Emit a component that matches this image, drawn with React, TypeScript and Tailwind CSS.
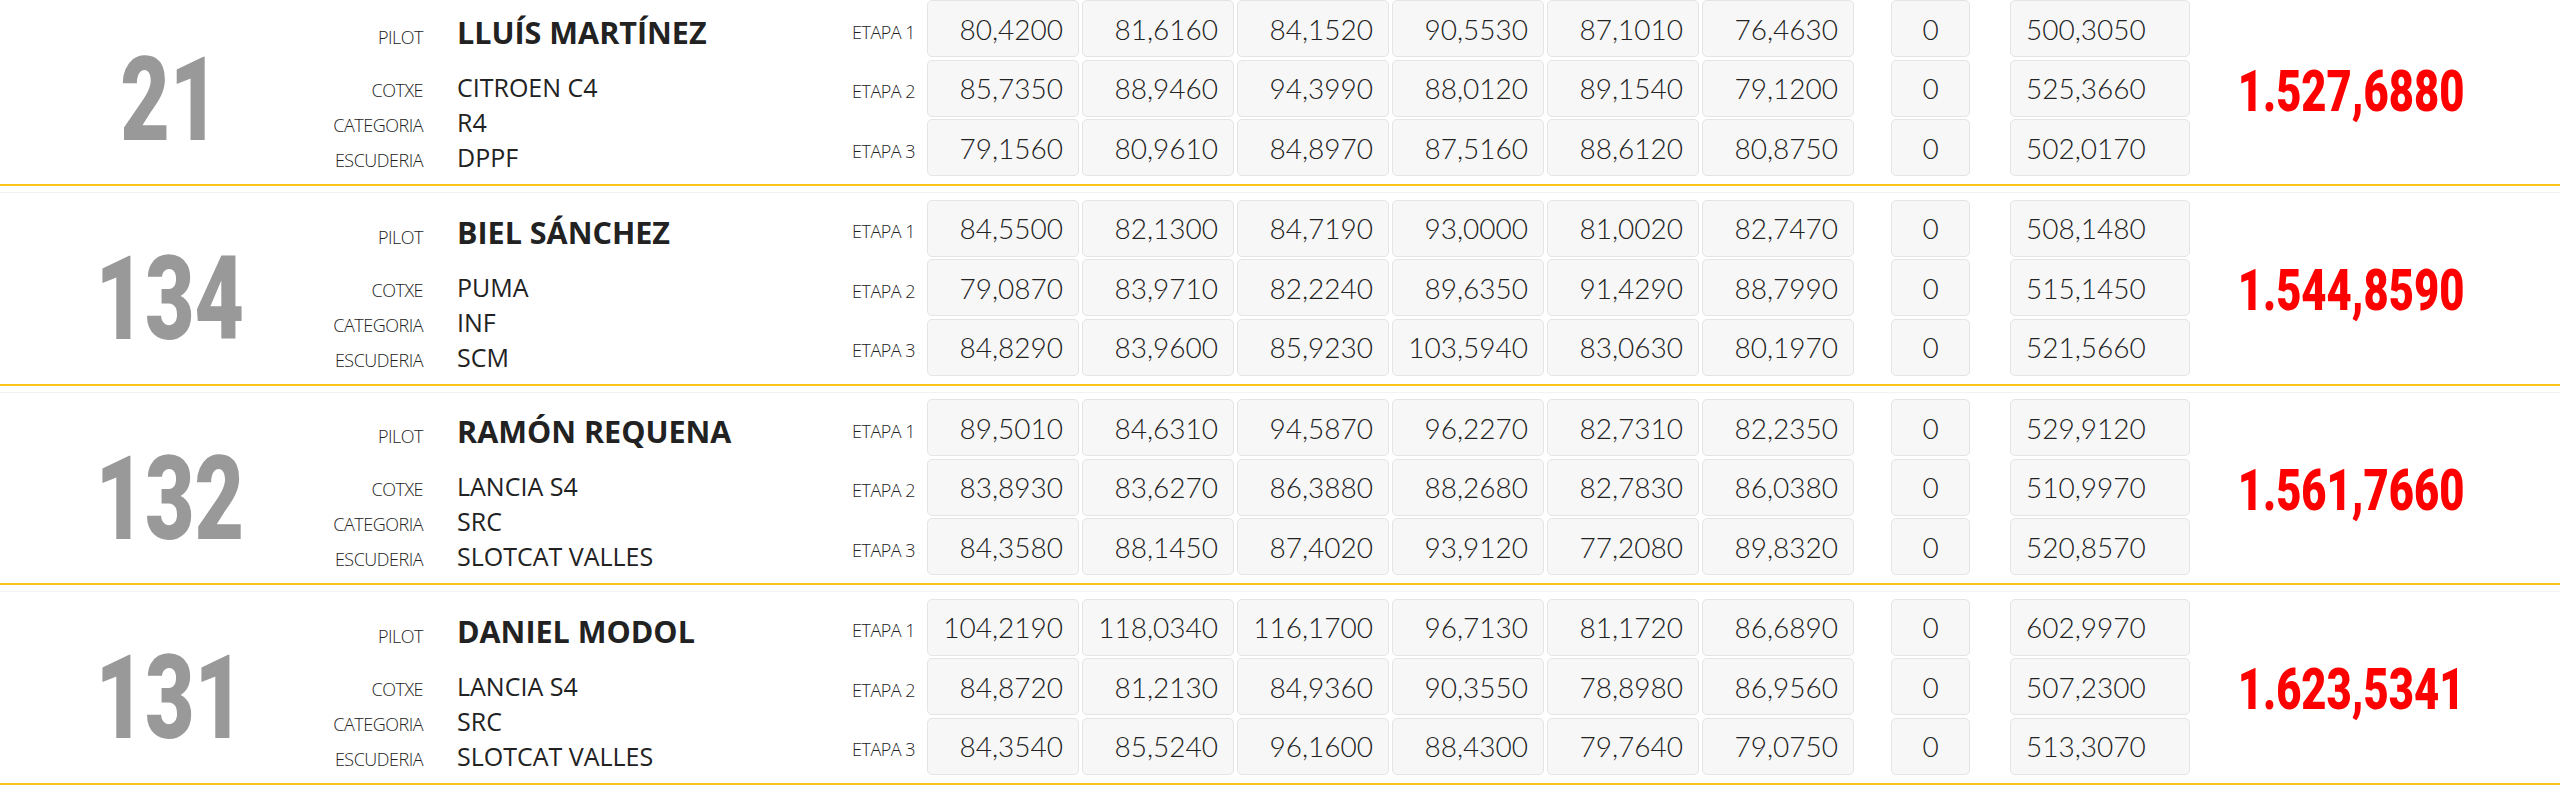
import React from "react";

type Entry = {
  dorsal: string;
  pilot: string;
  cotxe: string;
  categoria: string;
  escuderia: string;
  etapes: { temps: string[]; pen: string; total: string }[];
  total: string;
};

const entries: Entry[] = [
  {
    dorsal: "21",
    pilot: "LLUÍS MARTÍNEZ",
    cotxe: "CITROEN C4",
    categoria: "R4",
    escuderia: "DPPF",
    etapes: [
      { temps: ["80,4200", "81,6160", "84,1520", "90,5530", "87,1010", "76,4630"], pen: "0", total: "500,3050" },
      { temps: ["85,7350", "88,9460", "94,3990", "88,0120", "89,1540", "79,1200"], pen: "0", total: "525,3660" },
      { temps: ["79,1560", "80,9610", "84,8970", "87,5160", "88,6120", "80,8750"], pen: "0", total: "502,0170" },
    ],
    total: "1.527,6880",
  },
  {
    dorsal: "134",
    pilot: "BIEL SÁNCHEZ",
    cotxe: "PUMA",
    categoria: "INF",
    escuderia: "SCM",
    etapes: [
      { temps: ["84,5500", "82,1300", "84,7190", "93,0000", "81,0020", "82,7470"], pen: "0", total: "508,1480" },
      { temps: ["79,0870", "83,9710", "82,2240", "89,6350", "91,4290", "88,7990"], pen: "0", total: "515,1450" },
      { temps: ["84,8290", "83,9600", "85,9230", "103,5940", "83,0630", "80,1970"], pen: "0", total: "521,5660" },
    ],
    total: "1.544,8590",
  },
  {
    dorsal: "132",
    pilot: "RAMÓN REQUENA",
    cotxe: "LANCIA S4",
    categoria: "SRC",
    escuderia: "SLOTCAT VALLES",
    etapes: [
      { temps: ["89,5010", "84,6310", "94,5870", "96,2270", "82,7310", "82,2350"], pen: "0", total: "529,9120" },
      { temps: ["83,8930", "83,6270", "86,3880", "88,2680", "82,7830", "86,0380"], pen: "0", total: "510,9970" },
      { temps: ["84,3580", "88,1450", "87,4020", "93,9120", "77,2080", "89,8320"], pen: "0", total: "520,8570" },
    ],
    total: "1.561,7660",
  },
  {
    dorsal: "131",
    pilot: "DANIEL MODOL",
    cotxe: "LANCIA S4",
    categoria: "SRC",
    escuderia: "SLOTCAT VALLES",
    etapes: [
      { temps: ["104,2190", "118,0340", "116,1700", "96,7130", "81,1720", "86,6890"], pen: "0", total: "602,9970" },
      { temps: ["84,8720", "81,2130", "84,9360", "90,3550", "78,8980", "86,9560"], pen: "0", total: "507,2300" },
      { temps: ["84,3540", "85,5240", "96,1600", "88,4300", "79,7640", "79,0750"], pen: "0", total: "513,3070" },
    ],
    total: "1.623,5341",
  },
];

const label = "text-[18px] font-light tracking-[-0.5px] leading-none text-[#222] [font-family:'Open_Sans',sans-serif]";
const cell =
  "h-[57px] rounded-[5px] border border-[#e4e4e4] bg-[#f7f7f7] flex items-center text-[28px] font-light text-[#222] [font-family:Lato,sans-serif]";

function InfoRow({ name, value, big }: { name: string; value: string; big?: boolean }) {
  return (
    <div className={`flex items-baseline ${big ? "pt-[4px] h-[60px]" : "h-[35px]"}`}>
      <div className={`w-[93px] text-right ${label}`}>{name}</div>
      <div
        className={`ml-[34px] whitespace-nowrap text-[#222] [font-family:'Open_Sans',sans-serif] ${
          big ? "text-[30.5px] font-bold leading-[56px]" : "text-[25px] font-normal leading-[35px]"
        }`}
      >
        {value}
      </div>
    </div>
  );
}

export default function App() {
  return (
    <div className="w-[2560px] h-[792px] overflow-hidden bg-white">
      <div className="-mt-[7.5px]">
        {entries.map((e) => (
          <div
            key={e.dorsal}
            className="border-t border-[#f2f2f2] pt-[6.5px] pb-[8px] border-b-2 border-b-[#f9c51c] mb-[6px] flex"
          >
            {/* DORSAL */}
            <div className="w-[330px] pl-[10px] pt-[24px] flex items-center justify-center">
              <span className="inline-block scale-x-[0.73] text-[117px] leading-none font-black text-[#999] [font-family:Roboto,sans-serif]">
                {e.dorsal}
              </span>
            </div>

            {/* INFO */}
            <div className="w-[522px] flex flex-col">
              <InfoRow name="PILOT" value={e.pilot} big />
              <div className="h-[10px]" />
              <InfoRow name="COTXE" value={e.cotxe} />
              <InfoRow name="CATEGORIA" value={e.categoria} />
              <InfoRow name="ESCUDERIA" value={e.escuderia} />
            </div>

            {/* ETAPES */}
            <div className="flex flex-col gap-[2.5px]">
              {e.etapes.map((et, i) => (
                <div key={i} className="flex items-center">
                  <div className={`w-[75px] pt-[6px] ${label}`}>ETAPA {i + 1}</div>
                  <div className="flex gap-[3px]">
                    {et.temps.map((t, j) => (
                      <div key={j} className={`${cell} w-[152px] justify-end pr-[15px]`}>
                        {t}
                      </div>
                    ))}
                  </div>
                  <div className={`${cell} ml-[37px] w-[79px] justify-center`}>{et.pen}</div>
                  <div className={`${cell} ml-[40px] w-[180px] pl-[15px]`}>{et.total}</div>
                </div>
              ))}
            </div>

            {/* TOTAL */}
            <div className="ml-[10px] w-[302px] pt-[5px] flex items-center justify-center">
              <span className="inline-block scale-x-[0.75] text-[58px] leading-none font-black text-[#ff0000] [font-family:Roboto,sans-serif]">
                {e.total}
              </span>
            </div>
          </div>
        ))}
      </div>
    </div>
  );
}
